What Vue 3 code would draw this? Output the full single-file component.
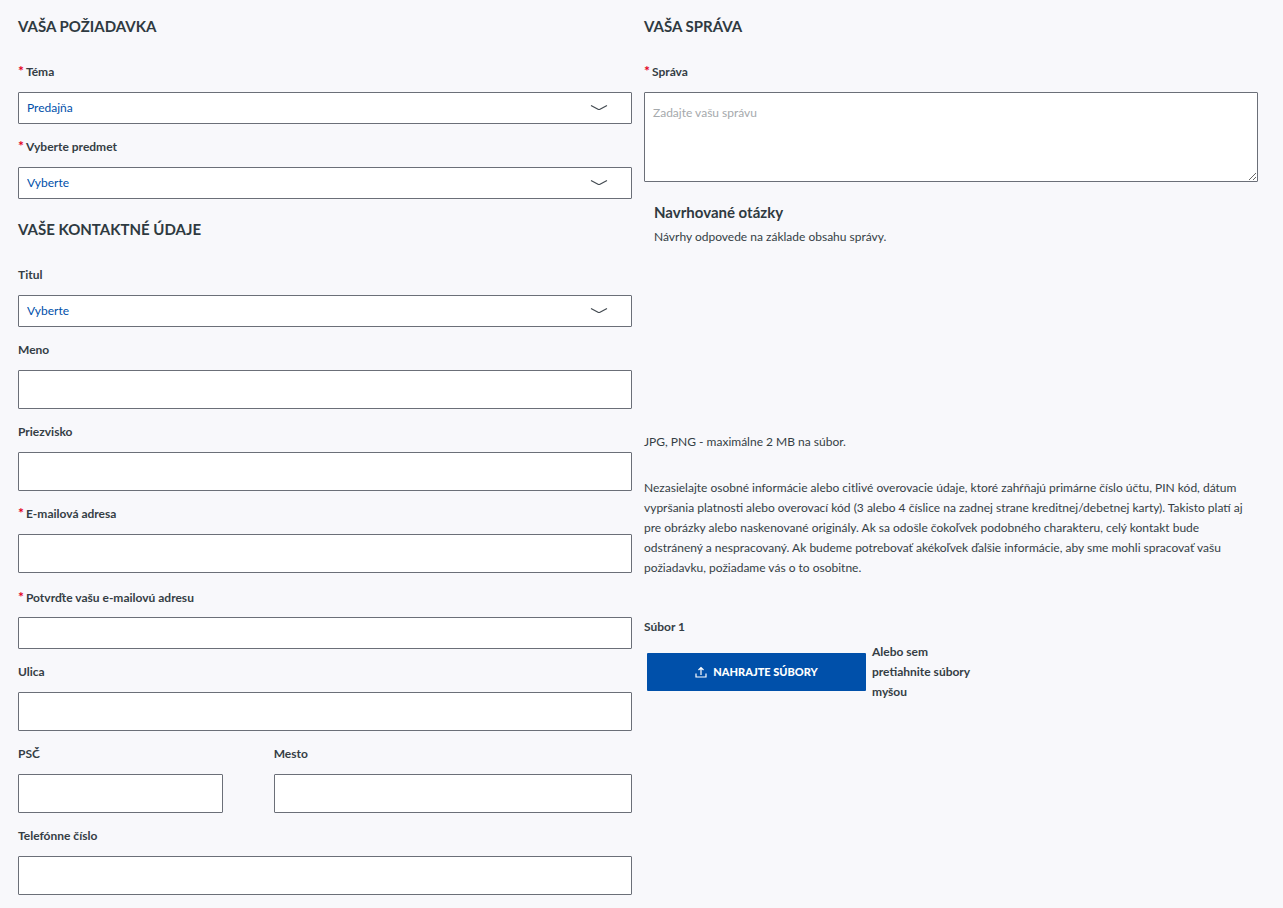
<script setup>
const topics = [
  { id: 'topic', label: 'Téma', value: 'Predajňa' },
  { id: 'subject', label: 'Vyberte predmet', value: 'Vyberte' },
]
const names = [
  { id: 'first-name', label: 'Meno', type: 'text' },
  { id: 'last-name', label: 'Priezvisko', type: 'text' },
  { id: 'email', label: 'E-mailová adresa', type: 'email', required: true },
]
</script>

<template>
  <form class="contact" @submit.prevent>
    <div class="column">
      <h2>VAŠA POŽIADAVKA</h2>
      <div v-for="t in topics" :key="t.id" class="field">
        <label :for="t.id" class="required">{{ t.label }}</label>
        <div class="select">
          <select :id="t.id"><option>{{ t.value }}</option></select>
          <svg viewBox="0 0 18 8" aria-hidden="true"><path d="M1 1.500L8 5.200Q9 5.800 10 5.200L17 1.500" /></svg>
        </div>
      </div>

      <h2 class="second">VAŠE KONTAKTNÉ ÚDAJE</h2>
      <div class="field">
        <label for="title">Titul</label>
        <div class="select">
          <select id="title"><option>Vyberte</option></select>
          <svg viewBox="0 0 18 8" aria-hidden="true"><path d="M1 1.500L8 5.200Q9 5.800 10 5.200L17 1.500" /></svg>
        </div>
      </div>
      <div v-for="n in names" :key="n.id" class="field">
        <label :for="n.id" :class="{ required: n.required }">{{ n.label }}</label>
        <input :id="n.id" :type="n.type">
      </div>
      <div class="field confirm">
        <label for="email-confirm" class="required">Potvrďte vašu e-mailovú adresu</label>
        <input id="email-confirm" type="email">
      </div>
      <div class="field">
        <label for="street">Ulica</label>
        <input id="street" type="text">
      </div>
      <div class="split">
        <div class="field">
          <label for="zip">PSČ</label>
          <input id="zip" type="text">
        </div>
        <div class="field">
          <label for="city">Mesto</label>
          <input id="city" type="text">
        </div>
      </div>
      <div class="field">
        <label for="phone">Telefónne číslo</label>
        <input id="phone" type="tel">
      </div>
    </div>

    <div class="column">
      <h2>VAŠA SPRÁVA</h2>
      <div class="field">
        <label for="message" class="required">Správa</label>
        <textarea id="message" placeholder="Zadajte vašu správu"></textarea>
      </div>
      <section class="suggestions">
        <h3>Navrhované otázky</h3>
        <p>Návrhy odpovede na základe obsahu správy.</p>
      </section>
      <p class="formats">JPG, PNG - maximálne 2 MB na súbor.</p>
      <p class="notice">Nezasielajte osobné informácie alebo citlivé overovacie údaje, ktoré zahŕňajú primárne číslo účtu, PIN kód, dátum vypršania platnosti alebo overovací kód (3 alebo 4 číslice na zadnej strane kreditnej/debetnej karty). Takisto platí aj pre obrázky alebo naskenované originály. Ak sa odošle čokoľvek podobného charakteru, celý kontakt bude odstránený a nespracovaný. Ak budeme potrebovať akékoľvek ďalšie informácie, aby sme mohli spracovať vašu požiadavku, požiadame vás o to osobitne.</p>
      <p class="file-label">Súbor 1</p>
      <div class="upload">
        <button type="button">
          <svg viewBox="0 0 12 12" aria-hidden="true"><path d="M1 7.500v3.500h10V7.500M6 9V1.500M3.500 4L6 1.500L8.500 4" /></svg>
          <span>NAHRAJTE SÚBORY</span>
        </button>
        <p>Alebo sem pretiahnite súbory myšou</p>
      </div>
    </div>
  </form>
</template>

<style>
body {
  margin: 0;
  background: #f8f8fb;
}
</style>

<style scoped>
.contact {
  display: grid;
  grid-template-columns: 1fr 1fr;
  gap: 12px;
  padding: 16px 25px 13px 18px;
  font: 12px/20px Lato, sans-serif;
  color: #353e45;
}
h2,
h3,
p {
  margin: 0;
}
h2,
h3 {
  font-size: 15px;
  line-height: 20px;
  font-weight: 700;
  color: #2f3a41;
}
h2 {
  margin-bottom: 26px;
}
h2.second {
  margin-top: 20px;
}
.field {
  display: flex;
  flex-direction: column;
  gap: 10px;
}
.field + .field,
.field + .split,
.split + .field {
  margin-top: 13px;
}
.split .field + .field {
  margin-top: 0;
}
label,
.file-label,
.upload p {
  font-weight: 700;
}
.required::before {
  content: "*";
  color: #e3001b;
  font-size: 14px;
  line-height: 1;
  margin-right: 2px;
}
input,
select,
textarea {
  display: block;
  box-sizing: border-box;
  width: 100%;
  margin: 0;
  padding: 0 8px;
  border: 1px solid #6b6f78;
  border-radius: 1px;
  background: #fff;
  font: inherit;
  color: #0050aa;
}
input {
  height: 39px;
}
.field + .field.confirm {
  margin-top: 15px;
}
.field.confirm {
  gap: 9px;
}
.confirm input,
select {
  height: 32px;
}
select {
  appearance: none;
}
.select {
  display: grid;
  align-items: center;
}
.select > * {
  grid-area: 1 / 1;
}
.select svg {
  justify-self: end;
  width: 18px;
  height: 8px;
  margin-right: 24px;
  pointer-events: none;
  fill: none;
  stroke: #444b52;
  stroke-width: 1.2;
}
.split {
  display: grid;
  grid-template-columns: 4fr 7fr;
  gap: 51px;
}
textarea {
  height: 90px;
  padding: 10px 8px;
  resize: both;
}
textarea::placeholder {
  color: #a5a9ac;
}
.suggestions {
  min-height: 230px;
  padding: 20px 10px 0;
  box-sizing: border-box;
}
h3 {
  margin-bottom: 5px;
}
.formats {
  margin: 20px 0 26px;
}
.file-label {
  margin-top: 39px;
}
.upload {
  display: flex;
  align-items: center;
  gap: 6px;
  margin: 5px 3px 0;
}
.upload p {
  max-width: 110px;
}
button {
  display: flex;
  align-items: center;
  justify-content: center;
  gap: 6px;
  width: 219px;
  height: 38px;
  border: 0;
  border-radius: 1px;
  background: #0050aa;
  color: #fff;
  font: inherit;
  font-size: 11px;
  font-weight: 900;
}
button svg {
  width: 12px;
  height: 12px;
  fill: none;
  stroke: #fff;
  stroke-width: 1.2;
}
</style>
